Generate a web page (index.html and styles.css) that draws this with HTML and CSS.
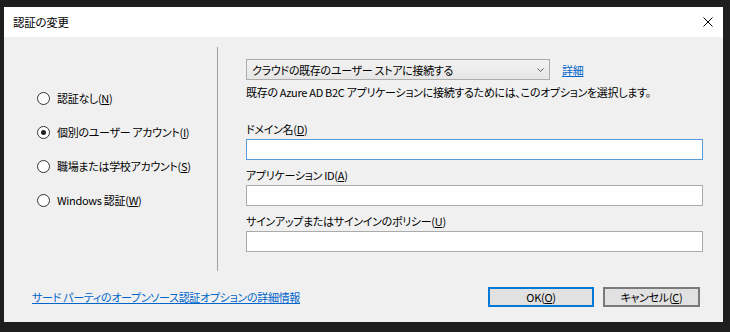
FILE: index.html
```html
<!DOCTYPE html>
<html lang="ja">
<head>
  <meta charset="UTF-8">
  <title>認証の変更</title>
  <link rel="stylesheet" href="styles.css">
</head>
<body>
  <div class="dialog">
    <div class="titlebar">
      <span class="title">認証の変更</span>
      <svg class="close" width="10" height="10" viewBox="0 0 10 10">
        <path d="M0.5 0.5 L9.5 9.5 M9.5 0.5 L0.5 9.5" stroke="#000" stroke-width="1" fill="none"/>
      </svg>
    </div>
    <div class="content">
      <div class="main">
        <div class="options">
          <label class="radio"><span class="circle"></span><span>認証なし(<u>N</u>)</span></label>
          <label class="radio checked"><span class="circle"></span><span>個別のユーザー アカウント(<u>I</u>)</span></label>
          <label class="radio"><span class="circle"></span><span>職場または学校アカウント(<u>S</u>)</span></label>
          <label class="radio"><span class="circle"></span><span>Windows 認証(<u>W</u>)</span></label>
        </div>
        <div class="divider"></div>
        <div class="settings">
          <div class="combo-row">
            <div class="combo">
              <span>クラウドの既存のユーザー ストアに接続する</span>
              <svg width="7" height="4" viewBox="0 0 7 4">
                <path d="M0.5 0.5 L3.5 3.5 L6.5 0.5" stroke="#555" stroke-width="1" fill="none"/>
              </svg>
            </div>
            <a class="link" href="#">詳細</a>
          </div>
          <p class="hint">既存の Azure AD B2C アプリケーションに接続するためには、このオプションを選択します。</p>
          <div class="field first">
            <span class="label">ドメイン名(<u>D</u>)</span>
            <div class="input focused"></div>
          </div>
          <div class="field">
            <span class="label">アプリケーション ID(<u>A</u>)</span>
            <div class="input"></div>
          </div>
          <div class="field">
            <span class="label">サインアップまたはサインインのポリシー(<u>U</u>)</span>
            <div class="input"></div>
          </div>
        </div>
      </div>
      <div class="footer">
        <a class="link" href="#">サード パーティのオープンソース認証オプションの詳細情報</a>
        <div class="buttons">
          <button class="btn default">OK(<u>O</u>)</button>
          <button class="btn cancel">キャンセル(<u>C</u>)</button>
        </div>
      </div>
    </div>
  </div>
</body>
</html>
```

FILE: styles.css
```css
body {
  margin: 0;
  width: 730px;
  height: 332px;
  overflow: hidden;
  background-color: #1e1e1e; /* editor behind the dialog */
  font-family: "Noto Sans CJK JP", "Noto Sans", sans-serif;
  font-size: 11px;
  font-feature-settings: "palt";
  letter-spacing: -0.3px;
  color: #000;
}

.dialog {
  margin: 7px 0 0 4px;
  width: 719px;
  height: 315px;
  background-color: #f0f0f0;
}

.titlebar {
  height: 30px;
  background-color: #fff;
  display: flex;
  align-items: center;
  justify-content: space-between;
  padding: 0 10px 0 9px;
}

.title {
  font-size: 11.5px;
}

.content {
  padding-top: 10px;
}

.main {
  display: flex;
  height: 224px;
}

.options {
  width: 180px;
  padding: 34px 0 0 33px;
}

.radio {
  display: flex;
  align-items: center;
  height: 34px;
  gap: 7px;
  line-height: 16px;
}

.circle {
  width: 11px;
  height: 11px;
  border: 1px solid #333;
  border-radius: 50%;
  background-color: #fff;
  display: flex;
  align-items: center;
  justify-content: center;
}

.checked .circle::after {
  content: "";
  width: 5px;
  height: 5px;
  border-radius: 50%;
  background-color: #222;
}

.divider {
  width: 1px;
  background-color: #a0a0a0;
}

.settings {
  margin-left: 28px;
  padding-top: 12px;
  width: 457px;
}

.combo-row {
  display: flex;
  align-items: center;
  gap: 12px;
  height: 21px;
}

.combo {
  width: 292px;
  height: 19px;
  border: 1px solid #acacac;
  background: linear-gradient(#f2f2f2, #e6e6e6);
  display: flex;
  align-items: center;
  justify-content: space-between;
  padding: 0 5px 0 5px;
}

.link {
  color: #0066cc;
  text-decoration: underline;
}

.hint {
  margin: 4px 0 0;
  height: 16px;
  line-height: 16px;
  white-space: nowrap;
}

.field {
  margin-top: 7px;
}

.field.first {
  margin-top: 21px;
}

.label {
  display: block;
  line-height: 16px;
  margin-bottom: 2px;
}

.input {
  height: 19px;
  border: 1px solid #ababab;
  background-color: #fff;
}

.input.focused {
  border-color: #5a9bdc;
}

.footer {
  margin-top: 16px;
  height: 20px;
  display: flex;
  align-items: center;
  justify-content: space-between;
  padding: 0 23px 0 28px;
}

.buttons {
  display: flex;
  gap: 9px;
}

.btn {
  height: 20px;
  padding: 0;
  font-family: inherit;
  font-size: 11px;
  font-feature-settings: "palt";
  letter-spacing: -0.3px;
  color: #000;
  background-color: #e1e1e1;
  border: 1px solid #adadad;
}

.btn.default {
  width: 106px;
  border: 2px solid #0078d7;
}

.btn.cancel {
  width: 97px;
  border: 2px solid #7a7a7a;
}
```
